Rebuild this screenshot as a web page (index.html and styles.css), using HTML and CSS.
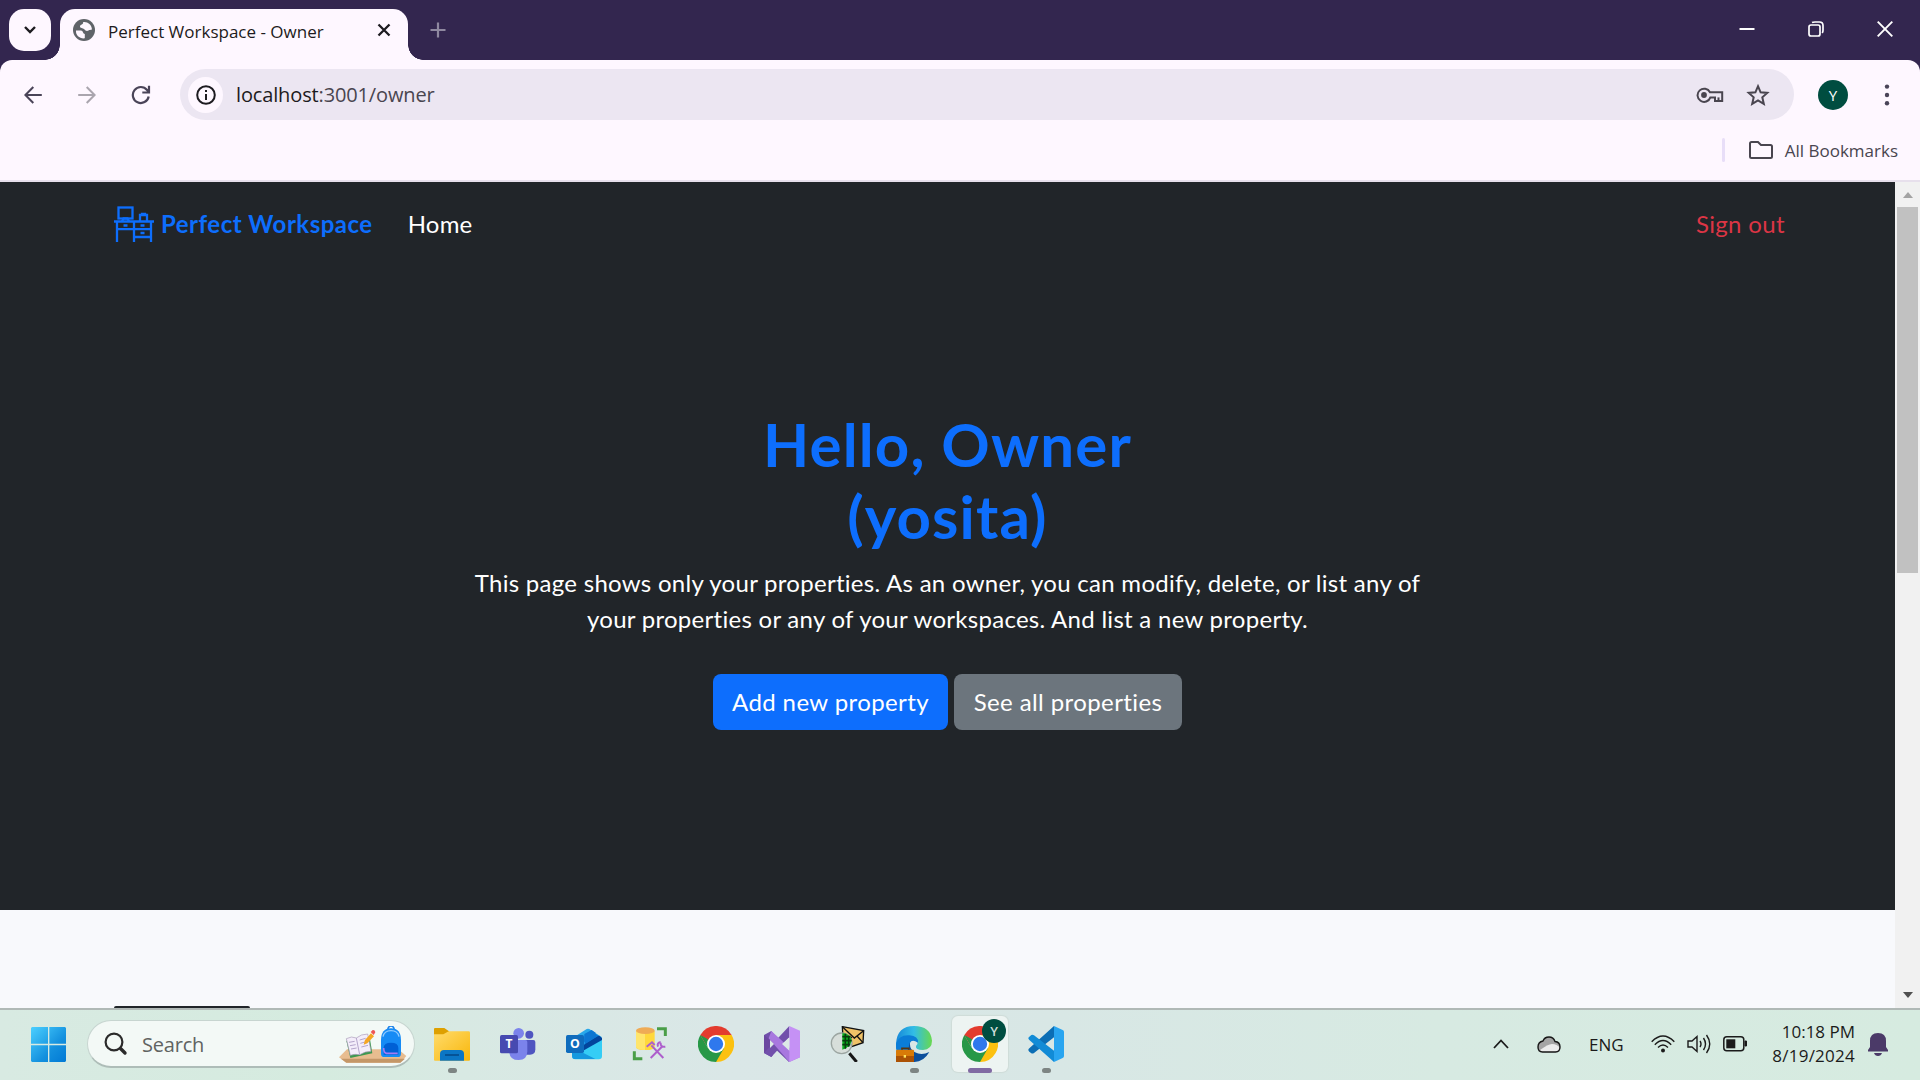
FILE: index.html
```html
<!DOCTYPE html>
<html lang="en">
<head>
<meta charset="utf-8">
<title>Perfect Workspace - Owner</title>
<link rel="stylesheet" href="styles.css">
</head>
<body>
<header class="titlebar">
  <button class="tab-search" aria-label="Search tabs"><svg width="14" height="10" viewBox="0 0 14 10"><path d="M2 2l5 5 5-5" fill="none" stroke="#1d1b20" stroke-width="2.4"/></svg></button>
  <div class="tab">
    <svg class="globe" width="22" height="22" viewBox="0 0 22 22"><circle cx="11" cy="11" r="11" fill="#5f6368"/><path d="M3 11.500h5c2 0 2 3.500 3.800 3.500v4.300C7 20 2.500 16.500 3 11.500zM10 3.200c1 2.300-3 2-3 4.300 0 2 3 1.300 4 2.500 1.500 2 3 2.500 4.500 1.500 1-.7 2-.5 3.500-1C18.500 5.500 14.500 2.500 10 3.200z" fill="#fef7ff"/></svg>
    <span class="tab-title">Perfect Workspace - Owner</span>
    <svg class="tab-close" width="14" height="14" viewBox="0 0 14 14"><path d="M1.500 1.500l11 11M12.500 1.500l-11 11" stroke="#1d1b20" stroke-width="2.300"/></svg>
  </div>
  <svg class="new-tab" width="16" height="16" viewBox="0 0 16 16"><path d="M8 .5v15M.5 8h15" stroke="#8f88a0" stroke-width="2.200"/></svg>
  <div class="window-controls">
    <svg width="16" height="16" viewBox="0 0 16 16"><path d="M.5 8h15" stroke="#fff" stroke-width="2"/></svg>
    <svg width="16" height="16" viewBox="0 0 16 16"><rect x="1" y="4" width="11" height="11" rx="2" fill="none" stroke="#fff" stroke-width="1.700"/><path d="M4 1.500C5 1 6 1 7 1h4.500Q15 1 15 4.500V9q0 2-.8 3" fill="none" stroke="#fff" stroke-width="1.700"/></svg>
    <svg width="16" height="16" viewBox="0 0 16 16"><path d="M.7.7l14.600 14.600M15.300.7L.7 15.300" stroke="#fff" stroke-width="1.900"/></svg>
  </div>
</header>
<section class="chrome-bars">
  <div class="toolbar">
    <svg class="nav-back" width="18" height="18" viewBox="0 0 18 18"><path d="M17.800 9H1.600M9.300 1L1.400 9l7.900 8" fill="none" stroke="#4a4458" stroke-width="2"/></svg>
    <svg class="nav-forward" width="18" height="18" viewBox="0 0 18 18"><path d="M.2 9h16.200M8.700 1l7.900 8-7.900 8" fill="none" stroke="#aaa5ae" stroke-width="2"/></svg>
    <svg class="nav-reload" width="20" height="20" viewBox="0 0 20 20"><path d="M17.700 11.500a8 8 0 1 1-1.600-6.500l2 2.200M18 .7v6.800h-6.700" fill="none" stroke="#4a4458" stroke-width="2.200"/></svg>
    <div class="omnibox">
      <span class="site-info"><svg width="20" height="20" viewBox="0 0 20 20"><circle cx="10" cy="10" r="8.800" fill="none" stroke="#1d1b20" stroke-width="2"/><path d="M10 9v6M10 5v2" stroke="#1d1b20" stroke-width="2"/></svg></span>
      <span class="url"><b>localhost</b>:3001/owner</span>
      <svg class="key" width="28" height="16" viewBox="0 0 28 16"><g fill="none" stroke="#49454f" stroke-width="2"><path d="M14 5.200h12.200V14H19v-3.600h-4.600A6.600 6.600 0 1 1 14 5.200z"/><path d="M22.500 14v-3.600"/></g><circle cx="8" cy="8" r="2.900" fill="#49454f"/></svg>
      <svg class="star" width="24" height="24" viewBox="0 0 24 24"><path d="M12 3.200l2.600 6.100 6.700.6-5 4.400 1.500 6.500-5.800-3.500-5.800 3.500 1.500-6.500-5-4.400 6.700-.6z" fill="none" stroke="#49454f" stroke-width="2"/></svg>
    </div>
    <span class="avatar">Y</span>
    <svg class="menu" width="6" height="22" viewBox="0 0 6 22"><g fill="#4a4458"><circle cx="3" cy="2.600" r="2.200"/><circle cx="3" cy="11" r="2.200"/><circle cx="3" cy="19.300" r="2.200"/></g></svg>
  </div>
  <div class="bookmarks">
    <i class="divider"></i>
    <svg width="24" height="18" viewBox="0 0 24 18"><path d="M1 15.500V2.500Q1 1 2.500 1H9l3 3h9.500Q23 4 23 5.500v10q0 1.500-1.500 1.500h-19Q1 17 1 15.500z" fill="none" stroke="#49454f" stroke-width="2"/></svg>
    <span class="bookmarks-label">All Bookmarks</span>
  </div>
</section>
<div class="viewport">
  <main class="page">
    <div class="hero">
      <nav class="navbar">
        <svg class="logo" width="40" height="36" viewBox="0 0 40 36"><g fill="none" stroke="#0d6efd" stroke-width="2.300"><rect x="4.500" y="1.500" width="14" height="11"/><path d="M8 15.500l1.500-3h4l1.500 3M26 15.500V9h7v6.500M28 9V8h3v1"/><path d="M0 15.500h40" stroke-width="2.600"/><path d="M3 16v20M20 16v20M37 16v20M3 23.200h34M20 31h17"/><path d="M9.500 19.500h4M26.500 19.500h4M26.500 27h4"/></g></svg>
        <a class="brand">Perfect Workspace</a>
        <a class="home">Home</a>
        <a class="sign-out">Sign out</a>
      </nav>
      <div class="intro">
        <h1>Hello, Owner<br>(yosita)</h1>
        <p>This page shows only your properties. As an owner, you can modify, delete, or list any of<br>your properties or any of your workspaces. And list a new property.</p>
        <div class="actions"><a class="btn primary">Add new property</a><a class="btn secondary">See all properties</a></div>
      </div>
    </div>
    <div class="listing"><i class="card-top"></i></div>
  </main>
  <div class="scrollbar"><i class="arrow up"></i><i class="thumb"></i><i class="arrow down"></i></div>
</div>
<footer class="taskbar">
  <svg class="start" width="36" height="36" viewBox="0 0 108 108"><defs><linearGradient id="win" x1="0" y1="0" x2="108" y2="108" gradientUnits="userSpaceOnUse"><stop offset="0" stop-color="#4cd0ff"/><stop offset=".6" stop-color="#1390de"/><stop offset="1" stop-color="#0078d4"/></linearGradient></defs><path d="M3 0h48v50H0V3zM55 0h47l3 3v47H55zM0 55h51v50H3l-3-3zM55 55h50v47l-3 3H55z" fill="url(#win)"/></svg>
  <div class="search">
    <svg class="magnifier" width="24" height="24" viewBox="0 0 24 24"><circle cx="10" cy="10" r="8.400" fill="none" stroke="#2b2b2b" stroke-width="2.200"/><path d="M16.500 16.500l4.500 4.500" stroke="#2b2b2b" stroke-width="3.400" stroke-linecap="round"/></svg>
    <span class="search-label">Search</span>
    <svg class="highlight" width="68" height="38" viewBox="0 0 204 114"><path d="M0 94l24-24h154l24 20-18 20H22z" fill="#e8bd90"/><path d="M6 98l16 12h162l14-12z" fill="#c49768"/><path d="M22 44l70-10 8 48-66 14z" fill="#3d9850"/><path d="M22 38q16-9 30-2 14-12 34-12l10 52q-18 0-34 10-14-3-28 2z" fill="#f3edfa" stroke="#a99bb8" stroke-width="2"/><path d="M52 36l10 50M30 49l17-3M33 59l17-3M36 69l17-3M62 42l18-5M64 52l18-5M67 63l20-5" stroke="#b4a5cb" stroke-width="3"/><path d="M74 56l4-14 18-20 9 9-20 21z" fill="#f5a623"/><path d="M95 18l6-6q7-1 8 7l-5 8z" fill="#ee5555"/><path d="M146 12q2-12 10-12t10 12" fill="none" stroke="#1b80e9" stroke-width="5"/><path d="M126 43q0-36 30-36t30 36v40q0 10-10 10h-40q-10 0-10-10z" fill="#168bf5"/><path d="M132 32q4-18 24-18t24 18" fill="none" stroke="#8fcbff" stroke-width="4"/><path d="M134 66q0-16 22-16t22 16v20h-44z" fill="#0060d5"/><path d="M134 66q0 14 8 16h34" fill="none" stroke="#a27cf4" stroke-width="5"/></svg>
  </div>
  <div class="apps">
    <span class="app open"><svg width="36" height="36" viewBox="0 0 108 108"><defs><linearGradient id="fold" x1="0" y1="0" x2="1" y2="1"><stop offset="0" stop-color="#ffdb6b"/><stop offset="1" stop-color="#f9b70b"/></linearGradient></defs><path d="M0 28V9q0-3 3-3h28l14 10v14z" fill="#dea000"/><path d="M0 25h28l16-9h60q4 0 4 4v81q0 3-3 3H3q-3 0-3-3z" fill="url(#fold)"/><path d="M18 104V84q0-12 12-12h48q12 0 12 12v20z" fill="#0b76c5"/><path d="M33 87h42" stroke="#064c8d" stroke-width="5"/></svg></span>
    <span class="app"><svg width="36" height="36" viewBox="0 0 108 108"><circle cx="88" cy="26" r="12" fill="#4f55c0"/><path d="M72 42h28q6 0 6 6v22q0 16-16 16H72z" fill="#4f55c0"/><circle cx="56" cy="22" r="16" fill="#7b83eb"/><path d="M34 42h42q6 0 6 6v28q0 26-26 26T28 80z" fill="#7b83eb"/><rect y="27" width="54" height="55" rx="5" fill="#464ab0"/><text x="27" y="67" text-anchor="middle" class="icon-letter" font-size="36">T</text></svg></span>
    <span class="app"><svg width="36" height="36" viewBox="0 0 108 108"><path d="M20 36L62 9q4-2 8 0l38 25-54 40H18z" fill="#28a8ea"/><path d="M56 46l30-24 14 9-44 34zM55 24l22-12 13 9-36 27z" fill="#0c76d2"/><path d="M54 57l45-28 9 8v8L54 78z" fill="#03459c"/><path d="M20 74l88-36v52q0 10-10 10H28q-10 0-10-10z" fill="#35cdf5"/><path d="M54 57l45-28 9 8v5L54 73z" fill="#03459c"/><path d="M18 64l70 35H28q-10 0-10-10z" fill="#1599df"/><rect y="27" width="54" height="54" rx="5" fill="#0f6cbd"/><text x="27" y="67" text-anchor="middle" class="icon-letter" font-size="37">O</text></svg></span>
    <span class="app"><svg width="36" height="36" viewBox="0 0 108 108"><path d="M12 14h56v48q0 10-28 10T12 62z" fill="#ffd83c"/><path d="M12 14h27v58Q12 70 12 62z" fill="#ffe56c"/><ellipse cx="40" cy="14" rx="28" ry="10" fill="#efab55"/><path d="M75 8h25v22M7 76v22h24" fill="none" stroke="#4a9e48" stroke-width="9"/><g stroke="#ad5fcc" stroke-width="6" fill="none"><path d="M56 96l36-36M94 96L58 58M44 62l16-13 8 8"/><path d="M86 50q-2 14 14 12M78 62q-4-12 8-14"/></g></svg></span>
    <span class="app"><svg width="36" height="36" viewBox="0 0 108 108"><g id="chrome-mark"><path d="M54 54L7.200 27A54 54 0 0 1 100.800 27z" fill="#e33b2e"/><path d="M54 54V27h46.800A54 54 0 0 1 54 108z" fill="#fcc110"/><path d="M54 54l23.400 13.500L54 108A54 54 0 0 1 7.200 27L30.600 67.500z" fill="#279847"/><path d="M54 27L20 28 7.200 27l15 26L54 54z" fill="#e33b2e"/><path d="M7.200 27l23.400 40.500L40 60 30 40z" fill="#279847"/><circle cx="54" cy="54" r="27" fill="#fff"/><circle cx="54" cy="54" r="21.500" fill="#2f78ed"/></g></svg></span>
    <span class="app"><svg width="36" height="36" viewBox="0 0 108 108"><path d="M0 27l22-12 56 72-3 21L22 58 20 42l-2 26 8 20-4 5L0 81z" fill="#7150ab"/><path d="M0 27l20 16v25L0 81z" fill="#6b47a0"/><path d="M22 93L0 81l76-81v34z" fill="#7150ab"/><path d="M22 15l86 79-32 14L14 37z" fill="#a878df"/><path d="M76 0l32 14v80l-32 14z" fill="#c591f5"/><path d="M76 34v40L54 54zM18 42v24l12-12z" fill="#dce9e6"/></svg></span>
    <span class="app"><svg width="36" height="36" viewBox="0 0 108 108"><path d="M37 2l64 12-2 36-58 20z" fill="#efc267" stroke="#111" stroke-width="4"/><path d="M37 2l36 34 28-22M41 70l24-37M99 50L81 30" fill="none" stroke="#111" stroke-width="4"/><circle cx="35" cy="52" r="31" fill="#d7deda" stroke="#9ca6a2" stroke-width="4"/><path d="M37 22q20-2 28 20-1 20-28 29z" fill="#0bb11d"/><path d="M37 32h25M37 44h28M37 56h24M46 23v45M56 29v33" stroke="#073e0d" stroke-width="5"/><path d="M58 82l22 26" stroke="#161616" stroke-width="9"/></svg></span>
    <span class="app open"><svg width="36" height="36" viewBox="0 0 108 108"><defs><linearGradient id="edge-top"><stop offset="0" stop-color="#1688d9"/><stop offset=".5" stop-color="#32bde6"/><stop offset="1" stop-color="#68d94e"/></linearGradient></defs><path d="M100 78q-20 35-54 29-30-6-30-38 1-28 29-31-10 30 12 41 20 10 43-1z" fill="#0c4f9c"/><path d="M0 52Q4 0 54 0q50 0 54 44 0 26-27 28-24 0-21-12 12-13-5-20-20-7-35 4Q0 56 0 84z" fill="url(#edge-top)"/><path d="M0 54q8-28 40-26 28 3 26 22-28-18-28 22l6 20H10Q0 76 0 54z" fill="#0b7dd7"/><rect y="71" width="54" height="37" rx="3" fill="#d87a08"/><path d="M0 90h54v18H0z" fill="#ab5205"/><path d="M18 71v-4h20v4" fill="none" stroke="#57340c" stroke-width="5"/><rect x="23" y="87" width="7" height="8" fill="#ffe25a"/></svg></span>
    <span class="app active"><svg width="36" height="36" viewBox="0 0 108 108"><use href="#chrome-mark"/></svg><i class="profile-badge">Y</i></span>
    <span class="app open"><svg width="36" height="36" viewBox="0 0 108 108"><path d="M78 0L4 67q-6 5 0 10l6 5q4 2 8-1L78 34z" fill="#0b6eb5"/><path d="M18 28q-4-3-8-1l-6 5q-6 5 0 10l74 66V74z" fill="#118bd6"/><path d="M78 0l26 12q4 2 4 6v72q0 4-4 6l-26 12z" fill="#29a5f0"/></svg></span>
  </div>
  <div class="tray">
    <svg class="chevron" width="16" height="10" viewBox="0 0 16 10"><path d="M1 9l7-7.500L15 9" fill="none" stroke="#1b1b1b" stroke-width="1.800"/></svg>
    <svg class="cloud" width="24" height="17" viewBox="0 0 24 17"><path d="M6 5q1.500-4 6-4 4.500 0 6 4.500Q23 6 23 11q0 5-4.500 5h-13Q1 16 1 11t5-6z" fill="#a5a5a5"/><path d="M3 14q8-6 12-6 5 0 8 4-1 4-4.500 4h-13z" fill="#ececec"/><path d="M6 5q1.500-4 6-4 4.500 0 6 4.500Q23 6 23 11q0 5-4.500 5h-13Q1 16 1 11t5-6z" fill="none" stroke="#161616" stroke-width="1.400"/></svg>
    <span class="lang">ENG</span>
    <svg class="wifi" width="24" height="18" viewBox="0 0 24 18"><g fill="none" stroke="#1b1b1b" stroke-width="1.400"><path d="M.7 6.800q11.300-11.500 22.600 0M3.800 9.700q8.200-8.200 16.400 0M7 12.500q5-5 10 0"/></g><circle cx="12" cy="15.500" r="2" fill="#1b1b1b"/></svg>
    <svg class="volume" width="24" height="20" viewBox="0 0 24 20"><g fill="none" stroke="#1b1b1b" stroke-width="1.400"><path d="M1 7h4l5-4.500v15L5 13H1zM13 7q2 3 0 6M16.500 4q4 6 0 12M19.500 1q6.500 9 0 18"/></g></svg>
    <svg class="battery" width="24" height="16" viewBox="0 0 24 16"><rect x=".8" y=".8" width="20" height="14" rx="3" fill="none" stroke="#1b1b1b" stroke-width="1.500"/><rect x="3.300" y="3.300" width="9" height="9" fill="#1b1b1b"/><path d="M22 5h1.500v5H22z" fill="#1b1b1b" stroke="#1b1b1b"/></svg>
    <div class="clock"><span class="time">10:18 PM</span><span class="date">8/19/2024</span></div>
    <svg class="bell" width="20" height="23" viewBox="0 0 20 23"><path d="M2 8q0-8 8-8t8 8v6l2 3v1.500H0V17l2-3zM6 20h8q-1 3-4 3t-4-3z" fill="#4b3a68"/></svg>
  </div>
</footer>
</body>
</html>
```
FILE: styles.css
```css
* { box-sizing: border-box; }
body { margin: 0; width: 1920px; height: 1080px; overflow: hidden; display: flex; flex-direction: column; background: #33264f; font-family: "Open Sans", "Noto Sans", sans-serif; }
svg { display: block; flex: none; }
.titlebar { height: 60px; flex: none; display: flex; padding-left: 9px; background: #33264f; }
.tab-search { position: relative; z-index: 1; width: 42px; height: 42px; margin: 9px 9px 0 0; padding: 0; border: 0; border-radius: 15px; background: #fef7ff; display: grid; place-items: center; }
.tab { position: relative; width: 348px; height: 51px; margin-top: 9px; padding: 0 17px 9px 13px; border-radius: 15px 15px 0 0; background: #fef7ff; display: flex; align-items: center; }
.tab::before, .tab::after { content: ""; position: absolute; bottom: 0; width: 15px; height: 15px; }
.tab::before { right: 100%; background: radial-gradient(circle at 0 0, #33264f 14.500px, #fef7ff 15px); }
.tab::after { left: 100%; background: radial-gradient(circle at 100% 0, #33264f 14.500px, #fef7ff 15px); }
.tab-title { margin: 3px auto 0 13px; font-size: 17px; line-height: 24px; color: #1d1b20; white-space: nowrap; }
.new-tab { margin: 22px 0 0 22px; }
.window-controls { display: flex; gap: 53px; margin: 21px 27px 0 auto; }
.chrome-bars { height: 122px; flex: none; background: #fef7ff; border-bottom: 2px solid #e7e0ec; border-radius: 12px 12px 0 0; }
.toolbar { height: 69px; display: flex; align-items: center; padding: 0 30px 0 24px; }
.nav-back { margin-right: 36px; }
.nav-forward { margin-right: 35px; }
.nav-reload { margin-right: 29px; }
.omnibox { width: 1614px; height: 51px; flex: none; border-radius: 26px; background: #ece6f2; display: flex; align-items: center; padding: 0 24px 0 8px; }
.site-info { width: 35px; height: 36px; border-radius: 50%; background: #fef7ff; display: grid; place-items: center; }
.url { margin: 0 auto 0 13px; font-size: 20px; letter-spacing: -.14px; color: #49454f; }
.url b { font-weight: 400; color: #1d1b20; }
.key { margin-right: 22px; }
.avatar { width: 30px; height: 30px; flex: none; margin: 0 37px 0 24px; border-radius: 50%; background: #004d40; color: #fff; font-size: 15px; line-height: 30px; text-align: center; }
.menu { margin-left: -1px; }
.bookmarks { height: 42px; display: flex; align-items: center; justify-content: flex-end; padding-right: 22px; }
.bookmarks .divider { width: 3px; height: 24px; border-radius: 2px; background: #e8def8; margin-right: 24px; }
.bookmarks-label { margin-left: 12px; font-size: 17px; color: #49454f; }
.viewport { flex: 1; display: flex; min-height: 0; font-family: Lato, "Noto Sans", sans-serif; }
.page { width: 1895px; display: flex; flex-direction: column; background: #f8f9fc; }
.hero { height: 728px; flex: none; background: #212529; color: #fff; }
.navbar { height: 82px; display: flex; align-items: center; padding: 0 110px 0 114px; font-size: 24px; }
.logo { margin-top: 2px; }
.brand { margin-left: 7px; font-weight: 700; letter-spacing: .5px; color: #0d6efd; }
.home { margin-left: 35px; letter-spacing: .2px; }
.sign-out { margin-left: auto; letter-spacing: .35px; color: #dc3545; }
.intro { display: flex; flex-direction: column; align-items: center; padding-top: 144px; text-align: center; white-space: nowrap; }
h1 { margin: 0; font-size: 60px; line-height: 72px; font-weight: 700; letter-spacing: 1.150px; color: #0d6efd; }
p { margin: 13px 0 37px; font-size: 24px; line-height: 36px; letter-spacing: .28px; }
.actions { display: flex; gap: 6px; }
.btn { height: 56px; border-radius: 8px; font-size: 24px; line-height: 55px; letter-spacing: .4px; }
.primary { width: 235px; background: #0d6efd; }
.secondary { width: 228px; background: #6c757d; }
.listing { flex: 1; display: flex; flex-direction: column; justify-content: flex-end; }
.card-top { width: 136px; height: 2px; margin-left: 114px; border-radius: 8px 8px 0 0; background: #212529; }
.scrollbar { width: 25px; background: #f1f1f1; display: flex; flex-direction: column; align-items: center; padding: 10px 0; }
.arrow { border: 5.500px solid transparent; }
.up { border-top: 0; border-bottom: 6px solid #a3a3a3; }
.down { border-bottom: 0; border-top: 6px solid #505050; margin-top: auto; }
.thumb { width: 21px; height: 366px; margin-top: 9px; background: #c1c1c1; }
.taskbar { height: 72px; flex: none; border-top: 2px solid #b0b9b6; display: flex; background: linear-gradient(90deg, #d8eae2 0, #d5ebdf 17%, #d8e9e3 24%, #dae7e7 38%, #d8e7e5 55%, #d7eae2 75%, #d6ebe0 100%); color: #1b1b1b; }
.start { margin: 17px 20px 0 31px; }
.search { width: 328px; height: 48px; margin-top: 10px; border: 1px solid #c7d5d0; border-bottom: 2px solid #aebdb8; border-radius: 24px; background: #f3f9f6; display: flex; align-items: center; padding: 0 7px 0 16px; }
.search-label { margin: 2px auto 0 14px; font-size: 20px; letter-spacing: -.2px; color: #606361; }
.highlight { margin-top: 3px; }
.apps { display: flex; margin-left: 4px; }
.app { position: relative; width: 66px; height: 70px; padding: 16px 15px 0; }
.app.open::after, .app.active::after { content: ""; position: absolute; left: 29px; top: 58px; width: 9px; height: 5px; border-radius: 3px; background: #7d8583; }
.app.active::after { left: 21px; width: 24px; background: #806aa3; }
.app.active::before { content: ""; position: absolute; left: 5px; top: 6px; width: 56px; height: 56px; border-radius: 6px; background: #edf4f2; box-shadow: 0 0 1px 1px #cfdcd8; }
.app.active svg { position: relative; }
.profile-badge { position: absolute; left: 35px; top: 9px; width: 24px; height: 24px; border-radius: 50%; background: #004d40; color: #cfdedb; font: 600 13px/24px "Open Sans", sans-serif; text-align: center; }
.icon-letter { fill: #fff; font-family: "Open Sans", sans-serif; font-weight: 700; }
.tray { margin-left: auto; padding-right: 32px; display: flex; align-items: center; height: 68px; }
.cloud { margin-left: 28px; }
.lang { width: 34px; margin-left: 28px; font-size: 17px; }
.wifi { margin-left: 28px; }
.volume, .battery { margin-left: 12px; }
.clock { width: 84px; margin: 0 13px 0 24px; display: flex; flex-direction: column; align-items: flex-end; font-size: 17px; line-height: 24px; white-space: nowrap; }
.date { letter-spacing: .25px; }
```
